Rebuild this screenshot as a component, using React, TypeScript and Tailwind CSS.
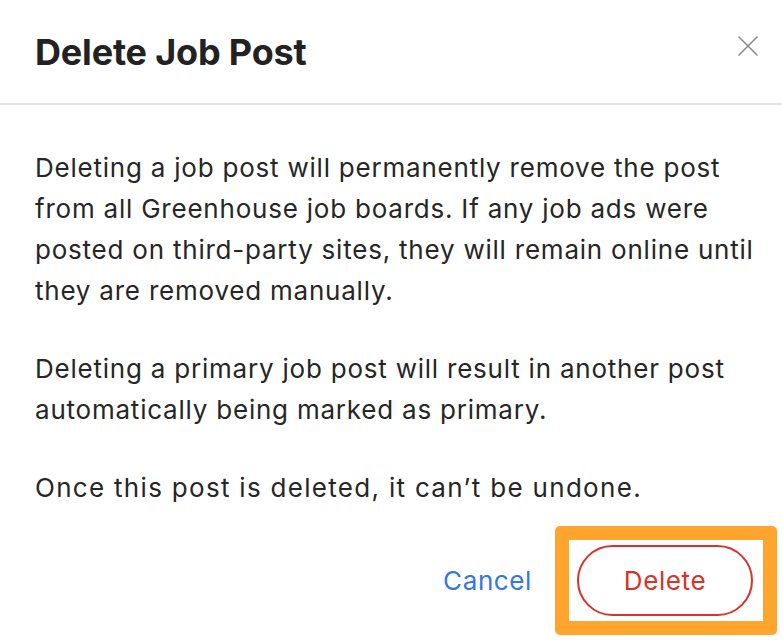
export default function App() {
  return (
    <div className="w-[782px] h-[644px] bg-white overflow-hidden text-[#262626]" style={{ fontFamily: 'Inter, "Noto Sans", sans-serif' }}>
      <div className="flex items-center justify-between h-[105px] pl-[35px] pr-[24px] border-b-2 border-[#e3e3e3]">
        <h1 className="text-[36px] font-bold tracking-[-0.005em] text-[#222]">Delete Job Post</h1>
        <button className="text-[#8a8a8a] -mt-[12px]">
          <svg width="20" height="20" viewBox="0 0 20 20" stroke="currentColor" strokeWidth="1.6" strokeLinecap="round">
            <path d="M1 1L19 19M19 1L1 19" />
          </svg>
        </button>
      </div>

      <div className="pl-[35px] pr-[14px] pt-[42px] text-[26px] leading-[41px] tracking-[0.03em] whitespace-nowrap">
        <p>
          Deleting a job post will permanently remove the post<br />
          from all Greenhouse job boards. If any job ads were<br />
          posted on third-party sites, they will remain online until<br />
          they are removed manually.
        </p>
        <p className="mt-[37px]">
          Deleting a primary job post will result in another post<br />
          automatically being marked as primary.
        </p>
        <p className="mt-[37px] tracking-[0.05em]">Once this post is deleted, it can’t be undone.</p>
      </div>

      <div className="flex items-center justify-end gap-[23px] pr-[5px] mt-[18px] tracking-[0.038em]">
        <button className="text-[26px] text-[#3378dd]">Cancel</button>
        <div className="border-[14px] border-[#ffa42d] rounded-[5px] pl-[8px] pr-[10px] py-[5px]">
          <button className="w-[176px] h-[71px] rounded-full border-2 border-[#d8322a] text-[26px] text-[#d8322a]">
            Delete
          </button>
        </div>
      </div>
    </div>
  );
}
